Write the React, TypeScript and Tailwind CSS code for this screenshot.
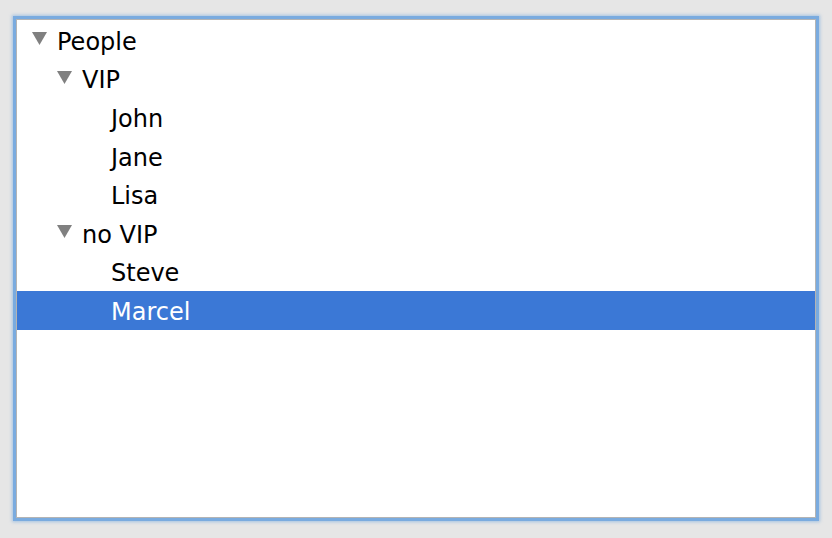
type Node = { label: string; depth: number; open?: boolean; selected?: boolean };

const rows: Node[] = [
  { label: "People", depth: 0, open: true },
  { label: "VIP", depth: 1, open: true },
  { label: "John", depth: 2 },
  { label: "Jane", depth: 2 },
  { label: "Lisa", depth: 2 },
  { label: "no VIP", depth: 1, open: true },
  { label: "Steve", depth: 2 },
  { label: "Marcel", depth: 2, selected: true },
];

const Caret = () => (
  <svg width="15" height="13" viewBox="0 0 15 13" className="shrink-0">
    <polygon points="0,0 15,0 7.5,13" fill="#808080" />
  </svg>
);

const Row = ({ node }: { node: Node }) => {
  const pad = node.depth === 0 ? "pl-[15px]" : node.depth === 1 ? "pl-[40px]" : "pl-[94px]";
  return (
    <div
      className={`flex items-center h-[38.6px] ${pad} ${
        node.selected ? "bg-[#3b78d6] text-white" : "text-black"
      }`}
    >
      {node.open !== undefined && (
        <span className="w-[25px] flex items-center -mt-[3px]">
          <Caret />
        </span>
      )}
      <span className="leading-none pt-[3px]">{node.label}</span>
    </div>
  );
};

export default function App() {
  return (
    <div
      className="w-[832px] h-[538px] bg-[#e6e6e6] pl-[16px] pr-[16px] pt-[19px] pb-[20px] flex"
      style={{ fontFamily: '"DejaVu Sans", sans-serif' }}
    >
      <div className="flex-1 bg-white border border-[#b4b4b4] shadow-[0_0_0_3px_#7aabdf,0_0_3px_4px_rgba(122,171,223,0.6)] text-[24px]">
        <div className="pt-[1px]">
          {rows.map((n) => (
            <Row key={n.label} node={n} />
          ))}
        </div>
      </div>
    </div>
  );
}
